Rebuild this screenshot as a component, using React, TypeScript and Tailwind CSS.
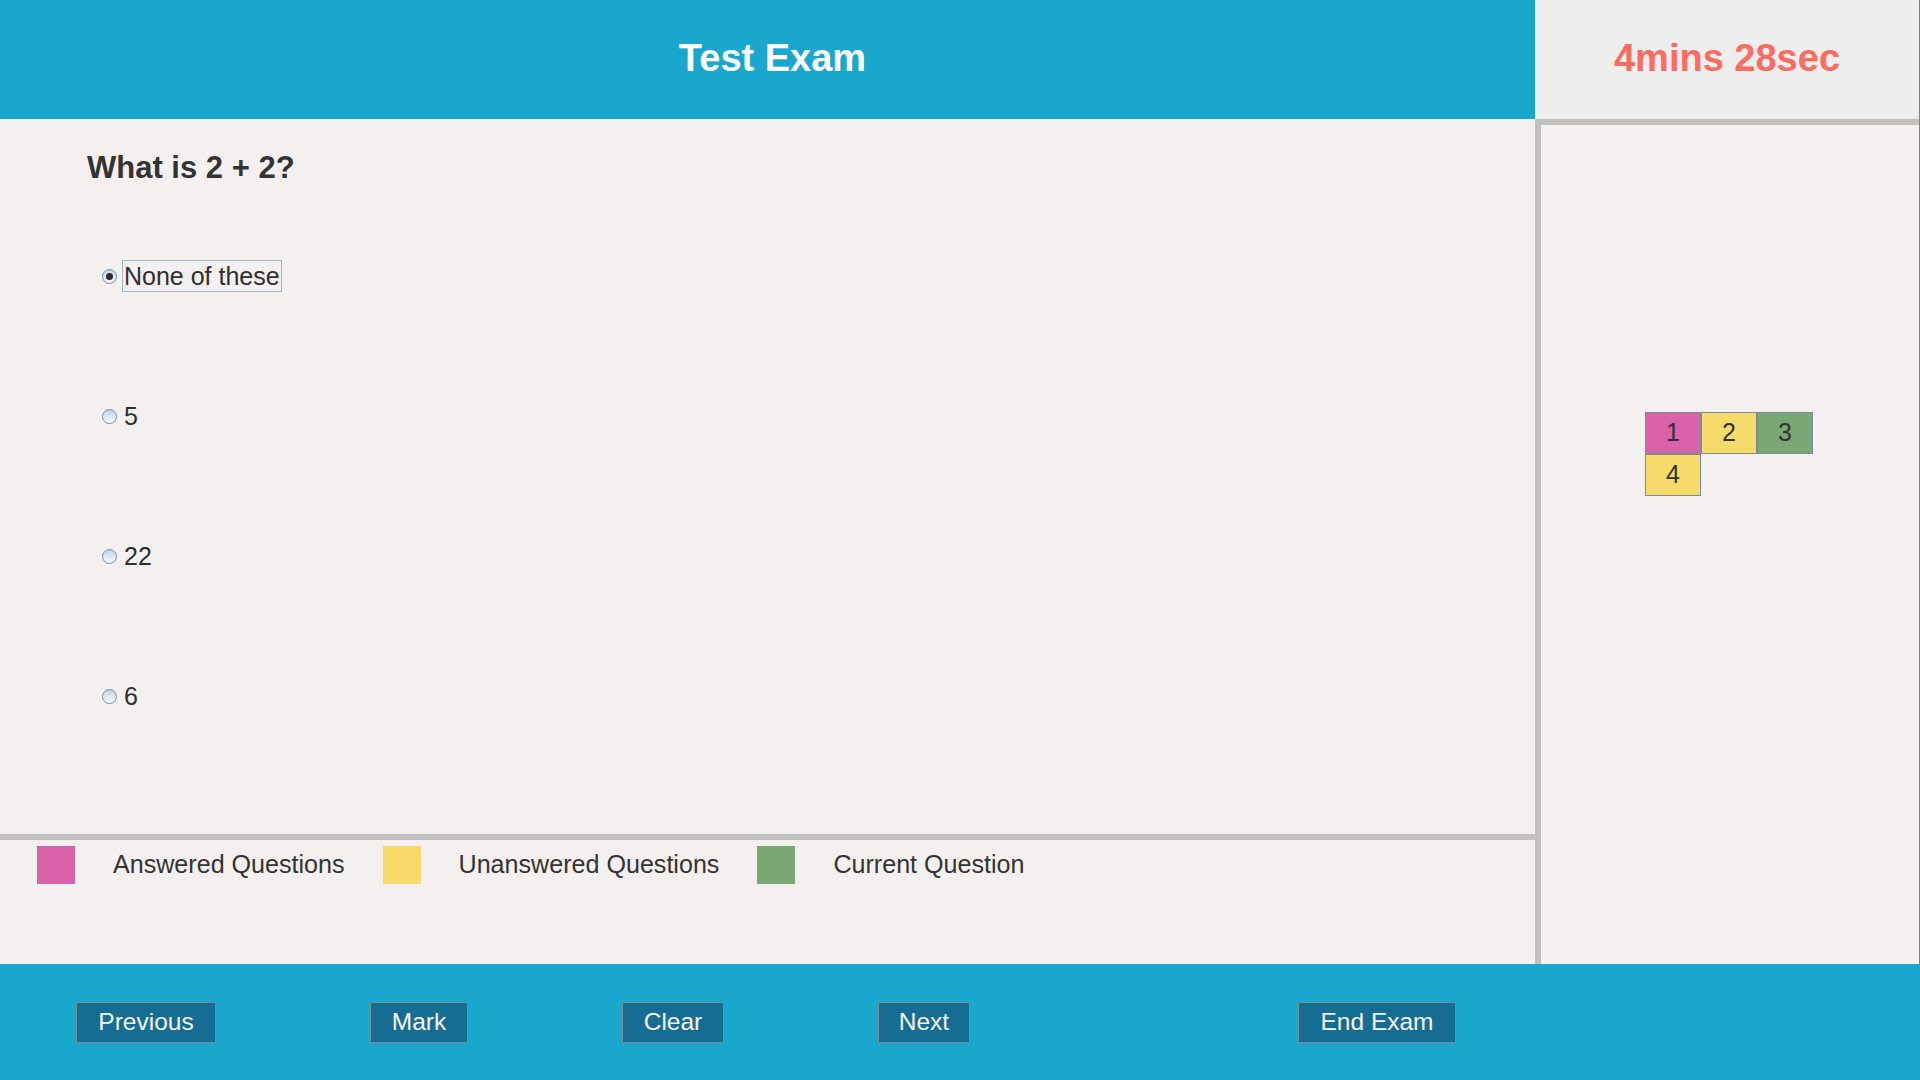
import React from "react";

const options = ["None of these", "5", "22", "6"];

const palette = [
  { n: 1, color: "bg-[#d962a8]" },
  { n: 2, color: "bg-[#f6da6a]" },
  { n: 3, color: "bg-[#7aa874]" },
  { n: 4, color: "bg-[#f6da6a]" },
];

function Radio({ checked }: { checked: boolean }) {
  return (
    <span className="w-[15px] h-[15px] rounded-full border border-[#7b8ea5] bg-gradient-to-b from-[#c3d3e4] to-[#f7fafd] flex items-center justify-center shrink-0">
      {checked && <span className="w-[7px] h-[7px] rounded-full bg-[#2b2b2b]" />}
    </span>
  );
}

export default function App() {
  const buttons = [
    { label: "Previous", w: "w-[140px]" },
    { label: "Mark", w: "w-[98px]" },
    { label: "Clear", w: "w-[102px]" },
    { label: "Next", w: "w-[92px]" },
  ];

  return (
    <div className="h-screen w-full flex flex-col font-['Liberation_Sans',Arial,sans-serif] bg-[#f4f0ef]">
      {/* header */}
      <div className="h-[119px] flex shrink-0">
        <div className="w-[1535px] bg-[#1aa7cd] flex items-center justify-center pl-[10px]">
          <h1 className="text-[38px] font-bold text-white -mt-[2px]">Test Exam</h1>
        </div>
        <div className="flex-1 bg-[#eeeeee] border-r border-[#1aa7cd] flex items-center justify-center">
          <span className="text-[38px] font-bold text-[#ff6b5e] -mt-[2px]">4mins 28sec</span>
        </div>
      </div>

      {/* main */}
      <div className="flex-1 flex min-h-0">
        <div className="w-[1535px] flex flex-col">
          <div className="flex-1 pt-[32px] pl-[87px]">
            <h3 className="text-[31px] leading-[34px] font-bold text-[#333333]">What is 2 + 2?</h3>
            <ul className="mt-[75px] flex flex-col gap-[108px] pl-[15px]">
              {options.map((opt, i) => (
                <li key={opt} className="h-[32px] flex items-center">
                  <Radio checked={i === 0} />
                  <label
                    className={
                      "ml-[5px] px-[1px] text-[25px] leading-[30px] text-[#2e2e2e] border " +
                      (i === 0 ? "border-[#a3b5c9]" : "border-transparent")
                    }
                  >
                    {opt}
                  </label>
                </li>
              ))}
            </ul>
          </div>
          <div className="h-[130px] border-t-[6px] border-[#c0c0c0] pt-[6px] pl-[37px]">
            <div className="flex items-center gap-[38px] text-[25.1px] text-[#333333]">
              <span className="w-[38px] h-[38px] bg-[#d962a8]" />
              <span>Answered Questions</span>
              <span className="w-[38px] h-[38px] bg-[#f6da6a]" />
              <span>Unanswered Questions</span>
              <span className="w-[38px] h-[38px] bg-[#7aa874]" />
              <span>Current Question</span>
            </div>
          </div>
        </div>

        {/* question palette */}
        <div className="flex-1 border-l-[6px] border-t-[6px] border-[#c0c0c0] pt-[287px] pl-[104px] relative">
          <div className="grid grid-cols-[repeat(3,56px)] auto-rows-[42px] w-fit">
            {palette.map((p) => (
              <div
                key={p.n}
                className={p.color + " border border-[#7d8b99] flex items-center justify-center text-[25px] text-[#333333]"}
              >
                {p.n}
              </div>
            ))}
          </div>
          <span className="absolute -top-[6px] right-0 bottom-0 w-px bg-[#1aa7cd]" />
        </div>
      </div>

      {/* footer */}
      <div className="h-[116px] shrink-0 bg-[#1aa7cd] flex items-center pl-[76px] gap-[154px]">
        {buttons.map((b) => (
          <button
            key={b.label}
            className={b.w + " h-[41px] bg-[#166d94] border border-[#7f8a94] text-[24.5px] text-[#f5f5f5] flex items-center justify-center"}
          >
            {b.label}
          </button>
        ))}
        <button className="w-[158px] ml-[174px] h-[41px] bg-[#166d94] border border-[#7f8a94] text-[24.5px] text-[#f5f5f5] flex items-center justify-center">
          End Exam
        </button>
      </div>
    </div>
  );
}
